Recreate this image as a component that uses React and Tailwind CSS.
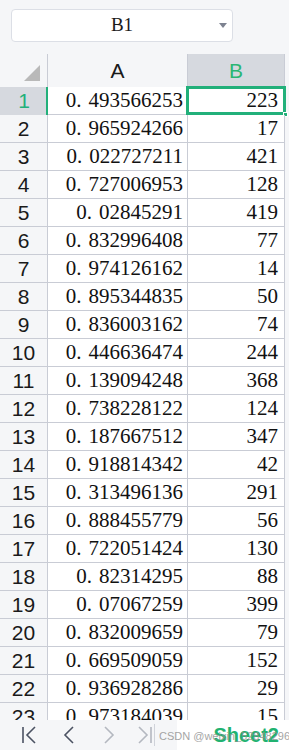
import React from 'react';

const rows = [
  ['0.493566253', 223],
  ['0.965924266', 17],
  ['0.022727211', 421],
  ['0.727006953', 128],
  ['0.02845291', 419],
  ['0.832996408', 77],
  ['0.974126162', 14],
  ['0.895344835', 50],
  ['0.836003162', 74],
  ['0.446636474', 244],
  ['0.139094248', 368],
  ['0.738228122', 124],
  ['0.187667512', 347],
  ['0.918814342', 42],
  ['0.313496136', 291],
  ['0.888455779', 56],
  ['0.722051424', 130],
  ['0.82314295', 88],
  ['0.07067259', 399],
  ['0.832009659', 79],
  ['0.669509059', 152],
  ['0.936928286', 29],
  ['0.973184039', 15],
];

const serif = { fontFamily: '"Liberation Serif", "Noto Sans CJK SC", serif' };
const sans = { fontFamily: '"Liberation Sans", Arial, sans-serif' };

// "0.xxx" with the wide decimal point of the sheet font
const Num = ({ value }) => {
  const [int, frac] = value.split('.');
  return (
    <span>
      {int}
      <span className="mr-[7px]">.</span>
      {frac}
    </span>
  );
};

const NavIcon = ({ dir, bar, light }) => {
  const stroke = light ? '#b4b8c0' : '#4b5262';
  return (
    <svg width="16" height="20" viewBox="0 0 16 20" fill="none" stroke={stroke} strokeWidth="1.6">
      {dir === 'left' ? (
        <>
          {bar && <path d="M2 2v16" />}
          <path d={bar ? 'M14 2 6 10l8 8' : 'M12 2 4 10l8 8'} />
        </>
      ) : (
        <>
          <path d={bar ? 'M2 2l8 8-8 8' : 'M4 2l8 8-8 8'} />
          {bar && <path d="M14 2v16" />}
        </>
      )}
    </svg>
  );
};

export default function App() {
  return (
    <div className="w-[289px] h-[750px] bg-[#f5f6f8] flex flex-col overflow-hidden">
      {/* name box */}
      <div className="pl-[11px] pt-[9px] pb-[12px]">
        <div className="relative w-[222px] h-[33px] bg-white border border-[#dcdfe6] rounded-[4px] flex items-center justify-center">
          <span className="text-[19px] text-[#1a1a1a]" style={serif}>B1</span>
          <svg className="absolute right-[5px] top-[13px]" width="8" height="5" viewBox="0 0 8 5">
            <path d="M0 0h8L4 5z" fill="#7d8290" />
          </svg>
        </div>
      </div>

      {/* grid */}
      <div className="flex-1 overflow-hidden relative">
        <div className="flex h-[33px]">
          <div className="w-[48px] border-r border-[#c9ccd5] flex items-end justify-end pr-[7px] pb-[6px]">
            <svg width="16" height="16" viewBox="0 0 16 16">
              <path d="M16 0v16H0z" fill="#b9b9b9" />
            </svg>
          </div>
          <div className="w-[140px] border-r border-[#c9ccd5] flex items-center justify-center text-[21px] text-[#1a1a1a]" style={sans}>
            A
          </div>
          <div className="w-[97px] bg-[#d6d9df] border-r border-[#c9ccd5] flex items-center justify-center text-[21px] text-[#2bb673]" style={sans}>
            B
          </div>
        </div>

        {rows.map(([a, b], i) => {
          const sel = i === 0;
          return (
            <div key={i} className="flex h-[28px]">
              <div
                className={
                  sel
                    ? 'w-[48px] bg-[#d6d9df] border-r-2 border-[#22b07a] flex items-center justify-center text-[21px] text-[#22b07a]'
                    : 'w-[48px] border-r border-b border-[#c9ccd5] flex items-center justify-center text-[21px] text-[#1a1a1a]'
                }
                style={sans}
              >
                <span className={sel ? 'ml-[2px]' : ''}>{i + 1}</span>
              </div>
              <div
                className="w-[140px] bg-white border-r border-b border-[#c9ccd5] flex items-center justify-end pr-[4px] text-[21px] text-[#111]"
                style={serif}
              >
                <Num value={a} />
              </div>
              <div
                className="relative w-[97px] bg-white border-r border-b border-[#c9ccd5] flex items-center justify-end pr-[6px] text-[21px] text-[#111]"
                style={serif}
              >
                {b}
                {sel && (
                  <>
                    <div className="absolute -left-[2px] -top-[1px] -right-[2px] -bottom-[1px] border-[3px] border-[#22b07a]" />
                    <div className="absolute -right-[4px] -bottom-[3px] w-[5px] h-[5px] bg-[#22b07a] border border-white" />
                  </>
                )}
              </div>
            </div>
          );
        })}
      </div>

      {/* sheet bar */}
      <div className="h-[30px] flex items-center relative">
        <div className="flex items-center pl-[21px]">
          <div className="w-[40px]"><NavIcon dir="left" bar /></div>
          <div className="w-[40px]"><NavIcon dir="left" /></div>
          <div className="w-[36px]"><NavIcon dir="right" light /></div>
          <div className="w-[17px]"><NavIcon dir="right" bar light /></div>
        </div>
        <div className="w-px h-[22px] bg-[#d0d3da]" />
        <div className="ml-auto w-[112px] h-full bg-white flex items-center justify-end pr-[10px]">
          <span className="text-[20px] font-bold text-[#21b270]" style={sans}>Sheet2</span>
        </div>
        <span className="absolute left-[159px] top-[8px] whitespace-nowrap text-[11px] text-[#8f8f8f] opacity-80" style={sans}>
          CSDN @weixin_52848296
        </span>
      </div>
    </div>
  );
}
